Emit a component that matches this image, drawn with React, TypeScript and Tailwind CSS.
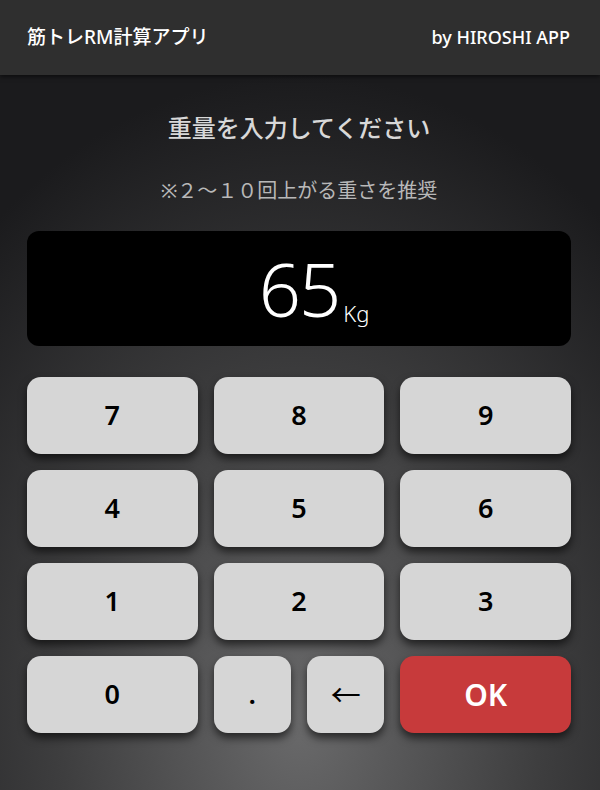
import React from "react";

const font = {
  fontFamily: '"Noto Sans", "Noto Sans CJK JP", sans-serif',
};

const Key = ({
  label,
  tone = "bg-[#d6d6d6] text-black",
}: {
  label: React.ReactNode;
  tone?: string;
}) => (
  <button
    className={`h-[77px] rounded-[14px] text-[27px] font-semibold shadow-[0_5px_9px_rgba(0,0,0,0.6)] flex items-center justify-center ${tone}`}
  >
    {label}
  </button>
);

export default function App() {
  const digits = ["7", "8", "9", "4", "5", "6", "1", "2", "3"];
  return (
    <div style={font} className="w-[600px] h-[790px] flex flex-col overflow-hidden">
      <header className="h-[75px] shrink-0 bg-[#2f2f2f] flex items-center justify-between pl-[27px] pr-[30px] text-white shadow-[0_2px_4px_rgba(0,0,0,0.5)] z-10">
        <span className="text-[19px] font-medium">筋トレRM計算アプリ</span>
        <span className="text-[18px] font-medium">by HIROSHI APP</span>
      </header>
      <main className="flex-1 pl-[27px] pr-[29px] flex flex-col bg-[radial-gradient(ellipse_80%_90%_at_50%_90%,#6a6a6b_0%,#3e3e3f_50%,#1b1b1d_100%)]">
        <h1 className="mt-[36px] text-center text-[24px] font-medium text-[#d8d8d8] leading-[34px]">
          重量を入力してください
        </h1>
        <p className="mt-[33px] text-center text-[20px] text-[#b8b8b8] leading-[26px]">
          ※２～１０回上がる重さを推奨
        </p>
        <div className="mt-[27px] h-[115px] rounded-[12px] bg-black flex items-center justify-center text-white">
          <span className="relative text-[74px] font-light leading-none tracking-[-2px]">
            65
            <span className="absolute left-full bottom-[2px] ml-[4px] text-[22px] font-light tracking-normal">
              Kg
            </span>
          </span>
        </div>
        <div className="mt-[31px] grid grid-cols-3 gap-x-[16px] gap-y-[16px]">
          {digits.map((d) => (
            <Key key={d} label={d} />
          ))}
          <Key label="0" />
          <div className="grid grid-cols-2 gap-x-[16px]">
            <Key label="." />
            <Key label={<span className="text-[30px] font-normal">←</span>} />
          </div>
          <Key label="OK" tone="bg-[#c73a3b] text-white text-[30px]" />
        </div>
      </main>
    </div>
  );
}
